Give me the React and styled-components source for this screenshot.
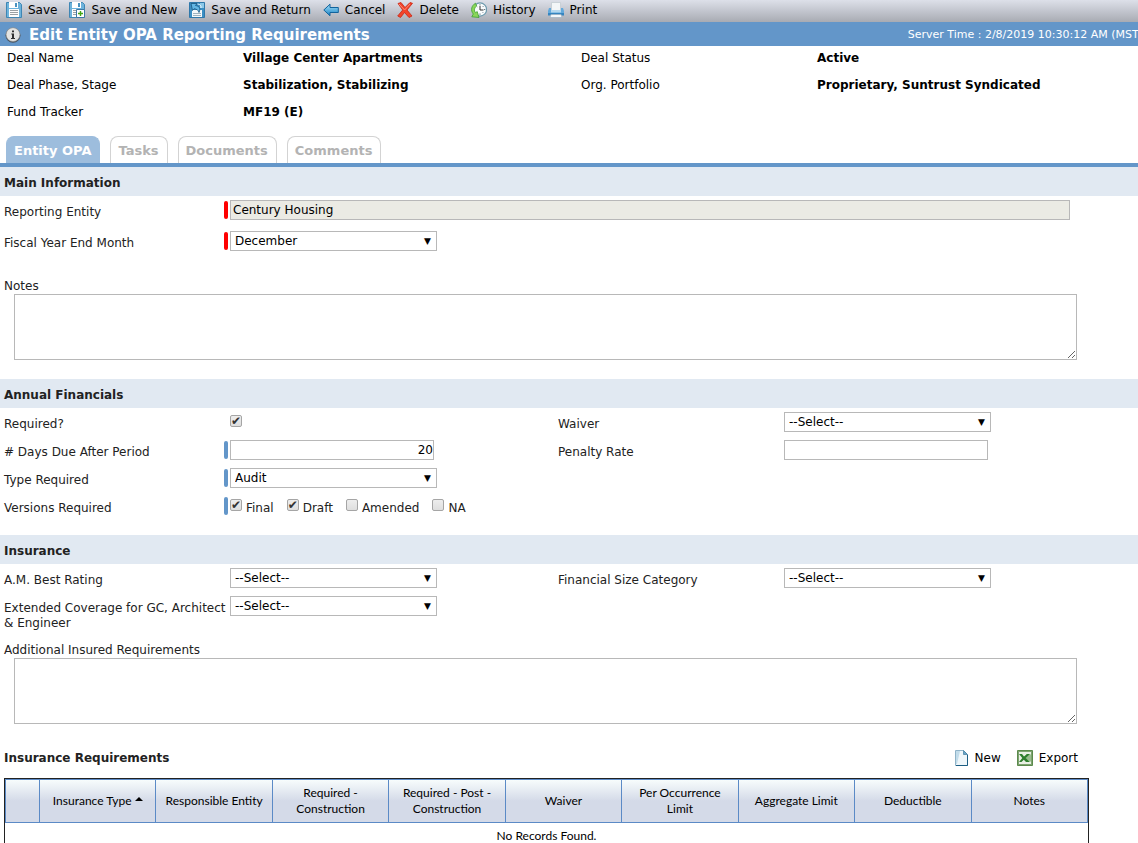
import React from 'react';
import styled, { createGlobalStyle, css } from 'styled-components';

const GlobalStyle = createGlobalStyle`
	* {
		box-sizing: border-box;
	}
	html {
		scrollbar-width: none;
	}
	body {
		margin: 0;
		background: #fff;
		color: #222;
		font: 12px/16px 'DejaVu Sans', Verdana, sans-serif;
	}
	button, input, select, textarea {
		font: inherit;
		color: #000;
	}
`;

const Page = styled.div`
	overflow: hidden;
`;

const Toolbar = styled.nav`
	display: flex;
	align-items: center;
	gap: 12px;
	height: 22px;
	padding: 0 6px 2px;
	background: linear-gradient(#dde0e9, #a8abb3);
`;

const IconButton = styled.button`
	display: flex;
	align-items: center;
	gap: 6px;
	padding: 0;
	border: 0;
	background: none;
	white-space: nowrap;
	cursor: pointer;
`;

const Icon = styled.svg.attrs({ viewBox: '0 0 16 16', 'aria-hidden': true })`
	display: block;
	width: 16px;
	height: 16px;
	flex: none;
`;

const TitleBar = styled.header`
	display: flex;
	align-items: center;
	gap: 8px;
	height: 24px;
	margin-right: -10px;
	padding: 1px 5px 0;
	background: #6396c9;
	color: #fff;
`;

const Title = styled.h1`
	flex: 1;
	margin: 0;
	font-size: 15px;
	line-height: 20px;
	white-space: nowrap;
`;

const ServerTime = styled.span`
	font-size: 11px;
	white-space: nowrap;
`;

const Summary = styled.dl`
	display: grid;
	grid-template-columns: repeat(2, 236px 1fr);
	row-gap: 11px;
	margin: 4px -17px 0 7px;
	color: #000;
`;

const Term = styled.dt`
	grid-column: ${props => props.$first ? '1' : 'auto'};
`;

const Detail = styled.dd`
	margin: 0;
	font-weight: bold;
	white-space: nowrap;
`;

const Tabs = styled.div`
	display: flex;
	gap: 10px;
	margin-top: 16px;
	padding: 0 6px;
	border-bottom: 4px solid #6396c9;
`;

const Tab = styled.button`
	height: 27px;
	padding: 2px 8px 0 7px;
	border: 1px solid ${props => props.$active ? '#9dbddd' : '#d3d3d3'};
	border-bottom: 0;
	border-radius: 8px 8px 0 0;
	background: ${props => props.$active ? '#9dbddd' : '#fff'};
	color: ${props => props.$active ? '#fff' : '#b3b3b3'};
	font-size: 13px;
	font-weight: bold;
`;

const SectionTitle = styled.h2`
	margin: 0;
	padding: 8px 4px 5px;
	background: #e1e9f2;
	font-size: 12px;
	line-height: 16px;
`;

const Fields = styled.div`
	display: grid;
	grid-template-columns: repeat(2, 1fr);
	row-gap: ${props => props.$gap || '8px'};
	padding: 4px 26px 0 4px;
	margin-bottom: ${props => props.$bottom || '0'};
`;

const FieldRow = styled.div`
	display: grid;
	grid-template-columns: 220px 4px 1fr;
	grid-column: ${props => props.$wide ? '1 / -1' : props.$first ? '1' : 'auto'};
	align-items: start;
`;

const FieldLabel = styled.label`
	padding-top: 5px;
	line-height: 15px;
	white-space: nowrap;
`;

const Mark = styled.span`
	height: 18px;
	margin-top: 1px;
	border-radius: 2px;
	background: ${props => props.$color || 'transparent'};
`;

const Control = styled.div`
	display: flex;
	align-items: flex-start;
	min-height: 20px;
	padding-left: 2px;
`;

const boxed = css`
	height: 20px;
	border: 1px solid #b8b8b8;
	border-radius: 0;
	background: #fff;
	outline: 0;
`;

const TextInput = styled.input`
	${boxed}
	width: ${props => props.$full ? 'calc(100% - 42px)' : '204px'};
	padding: 0 ${props => props.$full ? '2px' : '0'};
	text-align: ${props => props.$full ? 'left' : 'right'};

	&:read-only {
		background: #ebebe4;
	}
`;

const SelectBox = styled.div`
	position: relative;
	width: 207px;

	&::after {
		content: '▼';
		position: absolute;
		top: 2px;
		right: 6px;
		font-size: 9px;
		color: #000;
		pointer-events: none;
	}
`;

const Select = styled.select`
	${boxed}
	display: block;
	width: 100%;
	padding: 0 4px;
	appearance: none;
`;

const Check = styled.input.attrs({ type: 'checkbox' })`
	appearance: none;
	display: grid;
	place-items: center;
	width: 12px;
	height: 12px;
	margin: 3px 0 0;
	border: 1px solid #a5a5a5;
	border-radius: 2px;
	background: linear-gradient(#ededed, #dedede);

	&:checked::before {
		content: '✔';
		font-size: 12px;
		line-height: 10px;
		color: #333;
	}
`;

const CheckLabel = styled.label`
	display: flex;
	gap: 4px;
	margin-right: 13px;
	line-height: 20px;
`;

const CheckText = styled.span`
	padding-top: 2px;
`;

const NoteBlock = styled.div`
	padding: 0 61px 0 4px;
	margin-top: ${props => props.$top};
	margin-bottom: ${props => props.$bottom};
`;

const NoteLabel = styled.label`
	display: block;
	line-height: 16px;
`;

const NoteArea = styled.textarea`
	display: block;
	width: calc(100% - 10px);
	height: 66px;
	margin-left: 10px;
	border: 1px solid #b8b8b8;
	outline: 0;
`;

const GridBar = styled.div`
	display: flex;
	align-items: center;
	gap: 16px;
	margin: 0 60px 12px 4px;
`;

const GridTitle = styled.h2`
	flex: 1;
	margin: 0;
	font-size: 12px;
`;

const Grid = styled.table`
	width: calc(100% - 53px);
	margin-left: 4px;
	border: 1px solid #222;
	border-collapse: separate;
	border-spacing: 0;
	table-layout: fixed;
	color: #000;
	font-family: Lato, sans-serif;
	font-size: 12px;
`;

const HeadCell = styled.th`
	width: ${props => props.$width || 'auto'};
	height: 44px;
	padding: 0;
	border: solid #5b8ac6;
	border-width: 1px 1px 1px 0;
	background: linear-gradient(#f7fcfc, #d4dae8 50%);
	font-weight: normal;
	line-height: 16px;

	&:first-child {
		border-left-width: 1px;
	}
`;

const SortArrow = styled.span`
	display: inline-block;
	margin-left: 3px;
	border: solid transparent;
	border-width: 0 4px 4px;
	border-bottom-color: #000;
	vertical-align: 4px;
`;

const EmptyCell = styled.td`
	height: 26px;
	padding: 0;
	text-align: center;
`;

const Disk = () => (
	<>
		<path d="M.5.5h13l2 2v13H.5z" fill="#6db3dc" stroke="#3f86b4" />
		<path d="M3 0h9v6H3z" fill="#fff" />
		<path d="M9 1h2v4H9z" fill="#4a93c1" />
		<path d="M3 7h10v8H3z" fill="#fdfdfd" />
		<path d="M4 8.5h8M4 10.5h8M4 12.5h8" stroke="#9aa0a4" />
	</>
);

const SaveIcon = () => <Icon><Disk /></Icon>;

const SaveNewIcon = () => (
	<Icon>
		<Disk />
		<path d="M7.5 7.5h8v8h-8z" fill="#fff" stroke="#3f78a5" />
		<path d="M11.5 9v5M9 11.5h5" stroke="#41a514" strokeWidth="1.4" />
	</Icon>
);

const SaveReturnIcon = () => (
	<Icon>
		<path d="M.5.5h15v15H.5z" fill="#3c8fc4" stroke="#2f78aa" />
		<path d="M11 1h4v5h-4z" fill="#8cc8e8" />
		<path d="M3 8h10v7H3z" fill="#f4f8fa" />
		<path d="M4 11.5h8M4 13.5h8" stroke="#9fb2be" />
		<path d="M2 1.5h6L6.5 3.5C10 4 12 6 10 10.5 9.5 8 7.5 7 5 6.8L3.5 8.5z" fill="#63b6e4" stroke="#17547f" strokeWidth=".8" strokeLinejoin="round" />
		<path d="M8.5 2c2.5 0 4 2 3.5 4" fill="none" stroke="#eaf6fc" />
	</Icon>
);

const CancelIcon = () => (
	<Icon>
		<defs>
			<linearGradient id="arrow" x2="0" y2="1">
				<stop stopColor="#a9e1fa" />
				<stop offset="1" stopColor="#1682c4" />
			</linearGradient>
		</defs>
		<path d="M.8 8L7 2.2v3.3h8.3v5H7v3.3z" fill="url(#arrow)" stroke="#12639c" strokeLinejoin="round" />
	</Icon>
);

const DeleteIcon = () => (
	<Icon>
		<path d="M1 1.5l3-1 4 5 5-5 2.5.8L10 8l5 6-3 1.5-4.5-5-4 5L.7 14l5-6z" fill="#f3442b" stroke="#c92413" strokeWidth=".8" strokeLinejoin="round" />
		<path d="M2 2l5.6 6L13 2" fill="none" stroke="#ff8b72" />
	</Icon>
);

const HistoryIcon = () => (
	<Icon>
		<circle cx="9" cy="7.5" r="6.6" fill="#fafcfd" stroke="#6d9aae" strokeWidth="1.2" />
		<path d="M9 2.2v1.3M9 11.5v1.3M13 7.5h1.3M12.4 11l-.7-.7M12.6 4l-.8.8M5.6 4.2l.7.6" stroke="#506a78" strokeWidth=".9" />
		<path d="M9 4v4h3.5" fill="none" stroke="#333" />
		<path d="M4.5 1.2C.5 3.5-.8 8.3 2.3 12L.8 14.8l7.2.7-1.8-6-1.6 1.3C2.8 8.5 3.2 6 5.6 4z" fill="#8bd65a" stroke="#3f9f35" strokeWidth=".8" strokeLinejoin="round" />
	</Icon>
);

const PrintIcon = () => (
	<Icon>
		<path d="M3.5.5h9v8h-9z" fill="#f3f6f8" stroke="#c3cbd2" strokeWidth=".8" />
		<path d="M1 6h2v3h10V6h2l1 3v4H0V9z" fill="#62a9dc" />
		<path d="M0 11h16v2.5H0z" fill="#3585c0" />
		<path d="M3 8h10v2.5H3z" fill="#b5d8ef" />
		<path d="M3 12.5h10l1 3H2z" fill="#f3f7fa" stroke="#9cb0c0" strokeWidth=".7" />
	</Icon>
);

const InfoIcon = () => (
	<Icon>
		<circle cx="8" cy="8.3" r="7.5" fill="#47525d" />
		<circle cx="8" cy="7.6" r="6.9" fill="#e3e3e1" stroke="#8d8f91" strokeWidth=".6" />
		<path d="M7 3.5h2v1.8H7zM6.3 6.5H9V11h1v1H6v-1h1V7.5h-.7z" fill="#303030" />
	</Icon>
);

const NewIcon = () => (
	<Icon>
		<path d="M2.5.5h8l4 4v11h-12z" fill="#eef6fa" stroke="#8fb3c8" />
		<path d="M3 15.5h11.5V5" fill="none" stroke="#1b5d83" />
		<path d="M3 1h4L4 14H3z" fill="#c2dcea" />
		<path d="M10.5.5v4h4z" fill="#69a4c9" stroke="#3e7d9f" strokeWidth=".7" />
	</Icon>
);

const ExportIcon = () => (
	<Icon>
		<path d="M.5.5h15v15H.5z" fill="#7ea371" stroke="#5b8a4c" />
		<path d="M2 2h12v12H2z" fill="#e9f0e5" />
		<path d="M9 4h5v8H9z" fill="#b9d4af" />
		<path d="M9 6h5M9 8h5M9 10h5" stroke="#5d9350" strokeWidth=".7" />
		<path d="M2 4h3l2 2.5L10 4h3L8.7 8l4 4H9L6.8 9.7 4.5 12H2l3.3-4z" fill="#2e7e2d" />
	</Icon>
);

const actions = [
	['Save', SaveIcon],
	['Save and New', SaveNewIcon],
	['Save and Return', SaveReturnIcon],
	['Cancel', CancelIcon],
	['Delete', DeleteIcon],
	['History', HistoryIcon],
	['Print', PrintIcon]
];

const columns = [
	'Responsible Entity',
	<>Required -<br />Construction</>,
	<>Required - Post -<br />Construction</>,
	'Waiver',
	<>Per Occurrence<br />Limit</>,
	'Aggregate Limit',
	'Deductible',
	'Notes'
];

const RED = '#f00';
const BLUE = '#6396c9';

const Field = ({ id, label, mark, wide, first, children }) => (
	<FieldRow $wide={wide} $first={first}>
		<FieldLabel htmlFor={id}>{label}</FieldLabel>
		<Mark $color={mark} />
		<Control>{children}</Control>
	</FieldRow>
);

const Dropdown = ({ id, value = '--Select--' }) => (
	<SelectBox>
		<Select id={id} defaultValue={value}>
			<option>{value}</option>
		</Select>
	</SelectBox>
);

const versions = [
	['Final', true],
	['Draft', true],
	['Amended', false],
	['NA', false]
];

const App = () => (
	<Page>
		<GlobalStyle />
		<Toolbar>
			{actions.map(([name, Glyph]) => (
				<IconButton key={name} type="button"><Glyph />{name}</IconButton>
			))}
		</Toolbar>
		<TitleBar>
			<InfoIcon />
			<Title>Edit Entity OPA Reporting Requirements</Title>
			<ServerTime>Server Time : 2/8/2019 10:30:12 AM (MST)</ServerTime>
		</TitleBar>
		<Summary>
			<Term>Deal Name</Term>
			<Detail>Village Center Apartments</Detail>
			<Term>Deal Status</Term>
			<Detail>Active</Detail>
			<Term>Deal Phase, Stage</Term>
			<Detail>Stabilization, Stabilizing</Detail>
			<Term>Org. Portfolio</Term>
			<Detail>Proprietary, Suntrust Syndicated</Detail>
			<Term $first>Fund Tracker</Term>
			<Detail>MF19 (E)</Detail>
		</Summary>
		<Tabs role="tablist">
			<Tab role="tab" aria-selected="true" $active>Entity OPA</Tab>
			<Tab role="tab">Tasks</Tab>
			<Tab role="tab">Documents</Tab>
			<Tab role="tab">Comments</Tab>
		</Tabs>

		<SectionTitle>Main Information</SectionTitle>
		<Fields $gap="11px">
			<Field id="entity" label="Reporting Entity" mark={RED} wide>
				<TextInput id="entity" $full readOnly value="Century Housing" />
			</Field>
			<Field id="month" label="Fiscal Year End Month" mark={RED} wide>
				<Dropdown id="month" value="December" />
			</Field>
		</Fields>
		<NoteBlock $top="27px" $bottom="19px">
			<NoteLabel htmlFor="notes">Notes</NoteLabel>
			<NoteArea id="notes" />
		</NoteBlock>

		<SectionTitle>Annual Financials</SectionTitle>
		<Fields $bottom="17px">
			<Field id="required" label="Required?">
				<Check id="required" defaultChecked />
			</Field>
			<Field id="waiver" label="Waiver"><Dropdown id="waiver" /></Field>
			<Field id="days" label="# Days Due After Period" mark={BLUE}>
				<TextInput id="days" defaultValue="20" />
			</Field>
			<Field id="rate" label="Penalty Rate"><TextInput id="rate" /></Field>
			<Field id="type" label="Type Required" mark={BLUE} first>
				<Dropdown id="type" value="Audit" />
			</Field>
			<Field id="Final" label="Versions Required" mark={BLUE} first>
				{versions.map(([name, checked]) => (
					<CheckLabel key={name}>
						<Check id={name} defaultChecked={checked} />
						<CheckText>{name}</CheckText>
					</CheckLabel>
				))}
			</Field>
		</Fields>

		<SectionTitle>Insurance</SectionTitle>
		<Fields>
			<Field id="rating" label="A.M. Best Rating"><Dropdown id="rating" /></Field>
			<Field id="size" label="Financial Size Category"><Dropdown id="size" /></Field>
			<Field id="coverage" label={<>Extended Coverage for GC, Architect<br />&amp; Engineer</>}>
				<Dropdown id="coverage" />
			</Field>
		</Fields>
		<NoteBlock $top="11px" $bottom="26px">
			<NoteLabel htmlFor="additional">Additional Insured Requirements</NoteLabel>
			<NoteArea id="additional" />
		</NoteBlock>

		<GridBar>
			<GridTitle>Insurance Requirements</GridTitle>
			<IconButton type="button"><NewIcon />New</IconButton>
			<IconButton type="button"><ExportIcon />Export</IconButton>
		</GridBar>
		<Grid>
			<thead>
				<tr>
					<HeadCell $width="35px" />
					<HeadCell>Insurance Type<SortArrow /></HeadCell>
					{columns.map((label, i) => <HeadCell key={i}>{label}</HeadCell>)}
				</tr>
			</thead>
			<tbody>
				<tr><EmptyCell colSpan={10}>No Records Found.</EmptyCell></tr>
			</tbody>
		</Grid>
	</Page>
);

export default App;
